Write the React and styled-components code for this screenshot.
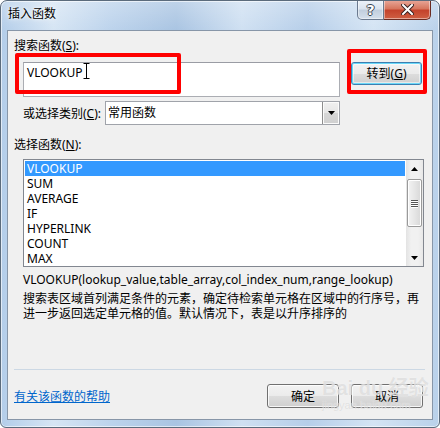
import React from "react";
import styled, { createGlobalStyle } from "styled-components";

const GlobalStyle = createGlobalStyle`
  html, body { margin: 0; padding: 0; background: #ffffff; }
  body {
    font-family: "Noto Sans", "Noto Sans CJK SC", sans-serif;
    font-size: 12px;
    color: #000;
  }
  * { box-sizing: border-box; }
`;

const Window = styled.div`
  position: relative;
  width: 440px;
  height: 428px;
  border: 1px solid #5b6b7c;
  border-radius: 7px 7px 6px 6px;
  background:
    linear-gradient(180deg, rgba(255,255,255,0.25) 0px, rgba(255,255,255,0) 30px),
    linear-gradient(90deg, #b3cde9 0%, #d6e5f4 12%, #bcd3ec 25%, #a9c4e2 40%, #cfe0f2 55%, #b6cee9 70%, #d4e4f4 85%, #b9d1ea 100%);
  box-shadow: inset 0 0 0 1px rgba(255,255,255,0.6);
  display: flex;
  flex-direction: column;
  padding: 0 6px 7px 6px;
  overflow: hidden;
`;

const TitleBar = styled.div`
  height: 29px;
  display: flex;
  align-items: flex-start;
`;

const Title = styled.div`
  margin-top: 5px;
  padding-left: 1px;
  font-size: 12px;
  line-height: 16px;
  color: #000;
  text-shadow: 0 0 6px rgba(255,255,255,0.95), 0 0 3px rgba(255,255,255,0.9);
`;

const CaptionGroup = styled.div`
  margin-left: auto;
  margin-right: 2px;
  margin-top: -1px;
  display: flex;
`;

const CaptionButton = styled.div`
  width: ${(p) => p.$w}px;
  height: 20px;
  display: flex;
  align-items: center;
  justify-content: center;
  border: 1px solid ${(p) => (p.$close ? "#6a2b22" : "#6b7a8f")};
  border-top: none;
  border-radius: ${(p) => (p.$close ? "0 0 5px 0" : "0 0 0 5px")};
  border-left-width: ${(p) => (p.$close ? "0" : "1px")};
  background: ${(p) =>
    p.$close
      ? "linear-gradient(180deg, #e9a99b 0%, #d7775f 45%, #c4432c 55%, #cf5f43 100%)"
      : "linear-gradient(180deg, #eef3f9 0%, #dbe4ef 45%, #c2cfde 55%, #d5e0ec 100%)"};
  box-shadow: inset 0 0 0 1px rgba(255,255,255,0.45);
  color: #fff;
  font-family: "DejaVu Sans", sans-serif;
  font-weight: bold;
  font-size: 14px;
  line-height: 1;
  text-shadow: -1px 0 #3a4550, 1px 0 #3a4550, 0 -1px #3a4550, 0 1px #3a4550;
`;

const Client = styled.div`
  flex: 1;
  position: relative;
  border: 1px solid #8796a8;
  background: #f0f0f0;
  padding: 0 8px 0 6px;
  display: flex;
  flex-direction: column;
`;

const SectionLabel = styled.div`
  margin-top: ${(p) => p.$mt}px;
  line-height: 15px;
  height: 15px;
  padding-left: ${(p) => p.$indent || 0}px;
  white-space: nowrap;
`;

const U = styled.span`
  text-decoration: underline;
`;

const SearchRow = styled.div`
  margin-top: 9px;
  padding-left: 9px;
  display: flex;
  gap: 11px;
  align-items: flex-start;
`;

const SearchInput = styled.div`
  position: relative;
  width: 317px;
  height: 35px;
  background: #fff;
  border: 1px solid #abadb3;
  border-top-color: #9a9ca4;
  padding: 2px 0 0 3px;
  line-height: 15px;
  font-size: 12px;
`;

const Cursor = styled.svg`
  position: absolute;
  left: 59px;
  top: 0px;
`;

const PushButton = styled.div`
  width: ${(p) => p.$w}px;
  height: ${(p) => p.$h}px;
  display: flex;
  align-items: center;
  justify-content: center;
  border: 1px solid ${(p) => (p.$default ? "#3c7fb1" : "#707070")};
  border-radius: 3px;
  background: linear-gradient(180deg, #f2f2f2 0%, #ebebeb 50%, #dddddd 51%, #cfcfcf 100%);
  box-shadow: ${(p) =>
    p.$default
      ? "inset 0 0 0 1px #6ad8f9, inset 0 0 0 2px rgba(255,255,255,0.5)"
      : "inset 0 0 0 1px rgba(255,255,255,0.8)"};
  font-size: 12px;
  line-height: 15px;
  color: #000;
`;

const CategoryRow = styled.div`
  margin-top: 4px;
  padding-left: 9px;
  display: flex;
  align-items: center;
  height: 24px;
`;

const CategoryLabel = styled.div`
  width: 82px;
  line-height: 15px;
  white-space: nowrap;
`;

const Select = styled.div`
  width: 235px;
  height: 24px;
  display: flex;
  background: #fff;
  border: 1px solid #a0a3aa;
`;

const SelectValue = styled.div`
  flex: 1;
  padding-left: 2px;
  line-height: 21px;
`;

const DropButton = styled.div`
  width: 17px;
  height: 100%;
  display: flex;
  align-items: center;
  justify-content: center;
  border-left: 1px solid #8d8d8d;
  background: linear-gradient(180deg, #f0f0f0 0%, #e6e6e6 50%, #d6d6d6 51%, #d0d0d0 100%);
  box-shadow: inset 0 0 0 1px #fbfbfb;
`;

const ListBox = styled.div`
  margin-top: 7px;
  margin-left: 9px;
  width: 401px;
  height: 108px;
  border: 1px solid #828790;
  background: #fff;
  display: flex;
`;

const ListRows = styled.div`
  flex: 1;
  padding: 1px;
`;

const ListRow = styled.div`
  height: 15px;
  line-height: 15px;
  padding-left: 2px;
  overflow: hidden;
  background: ${(p) => (p.$selected ? "#3399ff" : "transparent")};
  color: ${(p) => (p.$selected ? "#fff" : "#000")};
`;

const ScrollBar = styled.div`
  width: 17px;
  display: flex;
  flex-direction: column;
  align-items: center;
  background: linear-gradient(90deg, #e3e3e3 0%, #f1f1f1 30%, #f1f1f1 70%, #e8e8e8 100%);
`;

const ScrollArrow = styled.div`
  height: 17px;
  width: 17px;
  display: flex;
  align-items: center;
  justify-content: center;
`;

const ScrollThumb = styled.div`
  margin-top: 2px;
  width: 15px;
  height: 48px;
  border: 1px solid #9a9a9a;
  border-radius: 2px;
  background: linear-gradient(90deg, #f3f3f3 0%, #e6e6e6 50%, #d8d8d8 100%);
  box-shadow: inset 0 0 0 1px #ffffff;
  display: flex;
  flex-direction: column;
  align-items: center;
  justify-content: center;
  gap: 1px;
`;

const Grip = styled.div`
  width: 7px;
  height: 1px;
  background: #555;
  box-shadow: 0 1px 0 #fff;
`;

const ScrollSpacer = styled.div`
  flex: 1;
`;

const Signature = styled.div`
  margin-top: 5px;
  padding-left: 9px;
  line-height: 15px;
  white-space: nowrap;
`;

const Description = styled.div`
  margin-top: 4px;
  padding-left: 9px;
  line-height: 15px;
`;

const DescLine = styled.div`
  white-space: nowrap;
`;

const Separator = styled.div`
  margin-top: 48px;
  height: 1px;
  width: 411px;
  background: #ccd8e4;
`;

const Footer = styled.div`
  margin-top: 14px;
  height: 24px;
  display: flex;
  align-items: center;
`;

const HelpLink = styled.a`
  color: #0066cc;
  text-decoration: underline;
  line-height: 15px;
  cursor: pointer;
`;

const FooterButtons = styled.div`
  margin-left: auto;
  margin-right: 1px;
  display: flex;
  gap: 12px;
`;

const Highlight = styled.div`
  position: absolute;
  left: ${(p) => p.$x}px;
  top: ${(p) => p.$y}px;
  width: ${(p) => p.$w}px;
  height: ${(p) => p.$h}px;
  border: 4px solid #ff0000;
  border-radius: 2px;
  pointer-events: none;
`;

const Watermark = styled.div`
  position: absolute;
  left: 314px;
  top: 346px;
  display: flex;
  flex-direction: column;
  align-items: flex-start;
  pointer-events: none;
  color: rgba(200, 200, 200, 0.5);
  text-shadow: 0 0 1px rgba(255,255,255,0.8);
`;

const WatermarkMain = styled.div`
  font-family: "Liberation Sans", "Noto Sans CJK SC", sans-serif;
  font-weight: bold;
  font-size: 20px;
  line-height: 22px;
  white-space: nowrap;
`;

const WatermarkSub = styled.div`
  font-family: "Liberation Sans", sans-serif;
  font-size: 11px;
  line-height: 12px;
  white-space: nowrap;
`;

const functions = ["VLOOKUP", "SUM", "AVERAGE", "IF", "HYPERLINK", "COUNT", "MAX"];

const Triangle = ({ up }) => (
  <svg width="7" height="4" viewBox="0 0 7 4">
    <path d={up ? "M0 4 L3.5 0 L7 4 Z" : "M0 0 L7 0 L3.5 4 Z"} fill="#000" />
  </svg>
);

export default function App() {
  return (
    <>
      <GlobalStyle />
      <Window>
        <TitleBar>
          <Title>插入函数</Title>
          <CaptionGroup>
            <CaptionButton $w={27}>?</CaptionButton>
            <CaptionButton $w={47} $close>
              <svg width="13" height="11" viewBox="0 0 13 11">
                <path d="M2 1 L11 10 M11 1 L2 10" stroke="#3a2020" strokeWidth="4" strokeLinecap="square" />
                <path d="M2 1 L11 10 M11 1 L2 10" stroke="#ffffff" strokeWidth="2" strokeLinecap="square" />
              </svg>
            </CaptionButton>
          </CaptionGroup>
        </TitleBar>
        <Client>
          <SectionLabel $mt={7}>
            搜索函数(<U>S</U>):
          </SectionLabel>
          <SearchRow>
            <SearchInput>
              VLOOKUP
              <Cursor width="7" height="16" viewBox="0 0 7 16">
                <path d="M0.5 0.5 H6.5 M3.5 0.5 V15.5 M0.5 15.5 H6.5" stroke="#ffffff" strokeWidth="3" fill="none" />
                <path d="M0.5 0.5 H6.5 M3.5 0.5 V15.5 M0.5 15.5 H6.5" stroke="#000000" strokeWidth="1" fill="none" />
              </Cursor>
            </SearchInput>
            <PushButton $w={71} $h={23} $default>
              转到(<U>G</U>)
            </PushButton>
          </SearchRow>
          <CategoryRow>
            <CategoryLabel>
              或选择类别(<U>C</U>):
            </CategoryLabel>
            <Select>
              <SelectValue>常用函数</SelectValue>
              <DropButton>
                <Triangle />
              </DropButton>
            </Select>
          </CategoryRow>
          <SectionLabel $mt={12}>
            选择函数(<U>N</U>):
          </SectionLabel>
          <ListBox>
            <ListRows>
              {functions.map((f, i) => (
                <ListRow key={f} $selected={i === 0}>
                  {f}
                </ListRow>
              ))}
            </ListRows>
            <ScrollBar>
              <ScrollArrow>
                <Triangle up />
              </ScrollArrow>
              <ScrollThumb>
                <Grip />
                <Grip />
                <Grip />
                <Grip />
              </ScrollThumb>
              <ScrollSpacer />
              <ScrollArrow>
                <Triangle />
              </ScrollArrow>
            </ScrollBar>
          </ListBox>
          <Signature>VLOOKUP(lookup_value,table_array,col_index_num,range_lookup)</Signature>
          <Description>
            <DescLine>搜索表区域首列满足条件的元素，确定待检索单元格在区域中的行序号，再</DescLine>
            <DescLine>进一步返回选定单元格的值。默认情况下，表是以升序排序的</DescLine>
          </Description>
          <Separator />
          <Footer>
            <HelpLink>有关该函数的帮助</HelpLink>
            <FooterButtons>
              <PushButton $w={72} $h={24}>确定</PushButton>
              <PushButton $w={72} $h={24}>取消</PushButton>
            </FooterButtons>
          </Footer>
          <Watermark>
            <WatermarkMain>Bai du 经验</WatermarkMain>
            <WatermarkSub>jingyan.baidu.com</WatermarkSub>
          </Watermark>
        </Client>
        <Highlight $x={14} $y={52} $w={166} $h={41} />
        <Highlight $x={346} $y={48} $w={80} $h={45} />
      </Window>
    </>
  );
}
